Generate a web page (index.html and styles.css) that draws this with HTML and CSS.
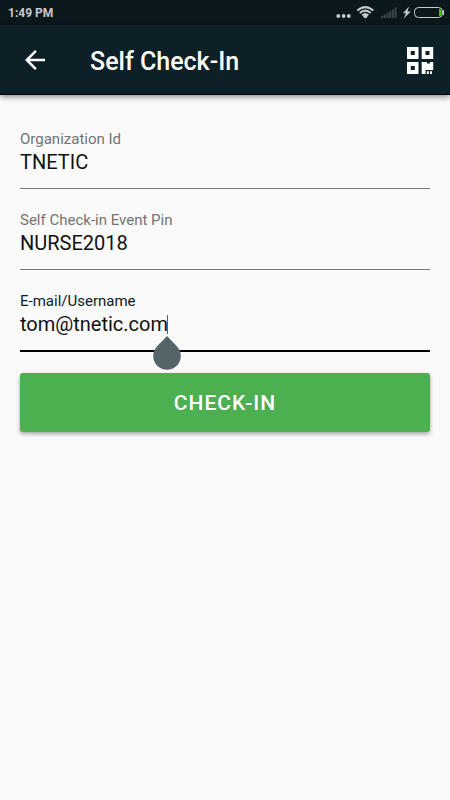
FILE: index.html
```html
<!DOCTYPE html>
<html lang="en">
<head>
<meta charset="utf-8">
<meta name="viewport" content="width=device-width, initial-scale=1">
<title>Self Check-In</title>
<link rel="stylesheet" href="styles.css">
</head>
<body>
<div class="status-bar">
  <span class="clock">1:49 PM</span>
  <svg class="status-icons" width="110" height="25" viewBox="0 0 110 25" aria-hidden="true">
    <g fill="#c6cacb">
      <circle cx="2.300" cy="16" r="1.900"/><circle cx="7.600" cy="16" r="1.900"/><circle cx="12.800" cy="16" r="1.900"/>
      <circle cx="29.300" cy="16.300" r="2"/>
      <path d="M73 6.500 67 13.200h3l-2.200 5.300 7-6.900h-3.300z"/>
    </g>
    <path transform="translate(-2.700 0)" fill="none" stroke="#c6cacb" stroke-width="2" d="M24 10.600Q32 3.600 40 10.600M26.500 13.100Q32 8.200 37.500 13.100M29 15.500Q32 12.600 35 15.500"/>
    <path fill="#36454a" d="M45 16h2v2h-2zM47.700 14.500h2V18h-2zM50.400 13h2v5h-2zM53.100 11.300h2V18h-2zM55.800 9.600h2V18h-2zM58.500 7.500h2V18h-2z"/>
    <rect x="78.500" y="7.500" width="28" height="10" rx="4" fill="none" stroke="#c6cacb"/>
    <path fill="#c6cacb" d="M107 10h1v5h-1z"/>
    <path fill="#43c400" d="M103 9h1q2 1 2 3.500t-2 3.500h-1z"/>
  </svg>
</div>
<header class="app-bar">
  <button class="icon-button" type="button" aria-label="Back">
    <svg width="30" height="30" viewBox="0 0 24 24"><path fill="#fff" d="M20 11H7.830l5.590-5.590L12 4l-8 8 8 8 1.410-1.410L7.830 13H20z"/></svg>
  </button>
  <h1 class="title">Self Check-In</h1>
  <button class="icon-button" type="button" aria-label="Scan QR code">
    <svg width="28" height="28" viewBox="0 0 28 28"><path fill="#fff" fill-rule="evenodd" d="M1 1h11.500v12H1zM4.800 5v4h4V5zM15.700 1H27.200v12H15.700zM19.500 5v4h4V5zM1 16h11.500v12H1zM4.800 20v4h4v-4zM15.700 16h5.300v1.500h3V16h3.200v8h-7.700v4h-3.800zM20.800 25.300h2V28h-2zM24 25.300h2V28h-2z"/></svg>
  </button>
</header>
<main>
  <form class="form">
    <div class="field">
      <label for="org">Organization Id</label>
      <input id="org" type="text" value="TNETIC">
    </div>
    <div class="field">
      <label for="pin">Self Check-in Event Pin</label>
      <input id="pin" type="text" value="NURSE2018">
    </div>
    <div class="field field-active">
      <label for="email">E-mail/Username</label>
      <input id="email" type="text" value="tom@tnetic.com">
      <span class="caret"></span>
      <svg class="handle" width="28" height="34" viewBox="0 0 28 34" aria-hidden="true"><path fill="#546469" d="M14 0 23.800 10.300a13.800 13.800 0 1 1-19.600 0z"/></svg>
    </div>
    <button class="submit" type="button">CHECK-IN</button>
  </form>
</main>
</body>
</html>
```
FILE: styles.css
```css
* {
  box-sizing: border-box;
}

body {
  margin: 0;
  min-height: 100vh;
  background: #fafafa;
  color: #111;
  font-family: Roboto, sans-serif;
}

button {
  border: 0;
  font-family: inherit;
}

.status-bar {
  display: flex;
  align-items: center;
  justify-content: space-between;
  height: 25px;
  padding: 0 4px 0 8px;
  background: #0a181c;
}

.clock {
  color: #c6cacb;
  font-size: 12px;
  font-weight: 700;
}

.app-bar {
  display: flex;
  align-items: center;
  height: 70px;
  padding: 0 16px 0 20px;
  background: #0d2027;
  border-bottom: 1px solid #000;
  box-shadow: 0 2px 6px rgba(0, 0, 0, 0.45);
}

.icon-button {
  display: flex;
  padding: 0;
  background: none;
}

.title {
  flex: 1;
  margin: 4px 0 0 40px;
  color: #fff;
  font-size: 25px;
  line-height: 32px;
  font-weight: 500;
}

.form {
  display: flex;
  flex-direction: column;
  gap: 21px;
  padding: 34px 20px;
}

.field {
  position: relative;
  display: flex;
  flex-direction: column;
  border-bottom: 1px solid #777;
}

.field label {
  color: #737373;
  font-size: 15px;
  line-height: 20px;
}

.field input {
  width: 100%;
  height: 39px;
  padding: 0 0 13px;
  border: 0;
  outline: 0;
  background: none;
  color: #111;
  font: 20px/26px Roboto, sans-serif;
}

.field-active {
  border-bottom: 2px solid #000;
}

.field-active label {
  color: #0d2027;
}

.caret {
  position: absolute;
  top: 24px;
  left: 147px;
  width: 1px;
  height: 19px;
  background: #546469;
}

.handle {
  position: absolute;
  top: 45px;
  left: 133px;
}

.submit {
  width: 100%;
  height: 59px;
  border-radius: 3px;
  background: #4caf50;
  box-shadow: 0 2px 4px rgba(0, 0, 0, 0.35);
  color: #fff;
  font-size: 21px;
  font-weight: 500;
  letter-spacing: 1px;
}
```
